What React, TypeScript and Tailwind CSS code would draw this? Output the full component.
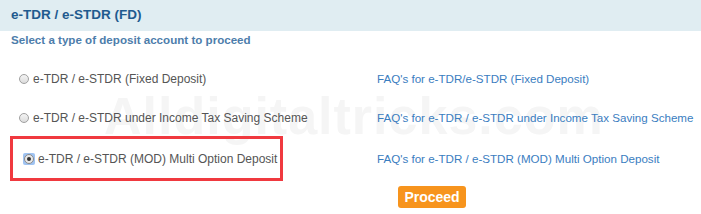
import React from 'react';

const rows = [
  { label: 'e-TDR / e-STDR (Fixed Deposit)', faq: "FAQ's for e-TDR/e-STDR (Fixed Deposit)", h: 'h-[42px]' },
  { label: 'e-TDR / e-STDR under Income Tax Saving Scheme', faq: "FAQ's for e-TDR / e-STDR under Income Tax Saving Scheme", h: 'h-[36px]' },
];

function Radio({ checked }: { checked?: boolean }) {
  if (checked) {
    return (
      <span className="flex h-[12px] w-[12px] shrink-0 items-center justify-center rounded-[2px] bg-[#9fc3f2]">
        <span className="flex h-[10px] w-[10px] items-center justify-center rounded-full border border-[#8a8a8a] bg-[#e8e8e8]">
          <span className="h-[4px] w-[4px] rounded-full bg-[#333]" />
        </span>
      </span>
    );
  }
  return <span className="h-[10px] w-[10px] shrink-0 rounded-full border border-[#a0a0a0] bg-gradient-to-b from-[#f4f4f4] to-[#dcdcdc]" />;
}

export default function App() {
  return (
    <div className="relative h-[214px] w-[701px] overflow-hidden bg-white font-['Liberation_Sans',Arial,sans-serif]">
      {/* watermark */}
      <div className="pointer-events-none absolute left-[104px] top-[90px] select-none whitespace-nowrap text-[52px] font-bold leading-none tracking-[1px] text-[#f5f5f5]">
        Alldigitaltricks.com
      </div>

      <div className="relative flex flex-col">
        <div className="flex h-[31px] items-center bg-[#e0edf2] px-[11px] text-[13.5px] font-bold text-[#1f5b8f]">
          e-TDR / e-STDR (FD)
        </div>
        <div className="whitespace-nowrap px-[11px] text-[11.6px] font-bold leading-[18px] text-[#4d7dab]">
          Select a type of deposit account to proceed
        </div>

        <div className="mt-[9px] flex flex-col">
          {rows.map((r) => (
            <div key={r.label} className={`flex ${r.h} items-center whitespace-nowrap`}>
              <div className="flex w-[377px] items-center gap-[4px] pl-[19px] text-[12px] text-[#555]">
                <Radio />
                <span>{r.label}</span>
              </div>
              <span className="text-[11.6px] text-[#3a7dbf]">{r.faq}</span>
            </div>
          ))}

          <div className="flex h-[45px] items-center whitespace-nowrap">
            <div className="ml-[10px] flex h-[45px] w-[273px] items-center gap-[3px] border-[3px] border-[#f0393f] pl-[10px] text-[12px] text-[#555]">
              <Radio checked />
              <span>e-TDR / e-STDR (MOD) Multi Option Deposit</span>
            </div>
            <span className="ml-[94px] text-[11.6px] text-[#3a7dbf]">FAQ's for e-TDR / e-STDR (MOD) Multi Option Deposit</span>
          </div>
        </div>

        <div className="mt-[5px] flex justify-start pl-[398px]">
          <button className="h-[22px] w-[68px] rounded-[3px] bg-[#f7941d] text-[14px] font-bold leading-none text-white">
            Proceed
          </button>
        </div>
      </div>
    </div>
  );
}
